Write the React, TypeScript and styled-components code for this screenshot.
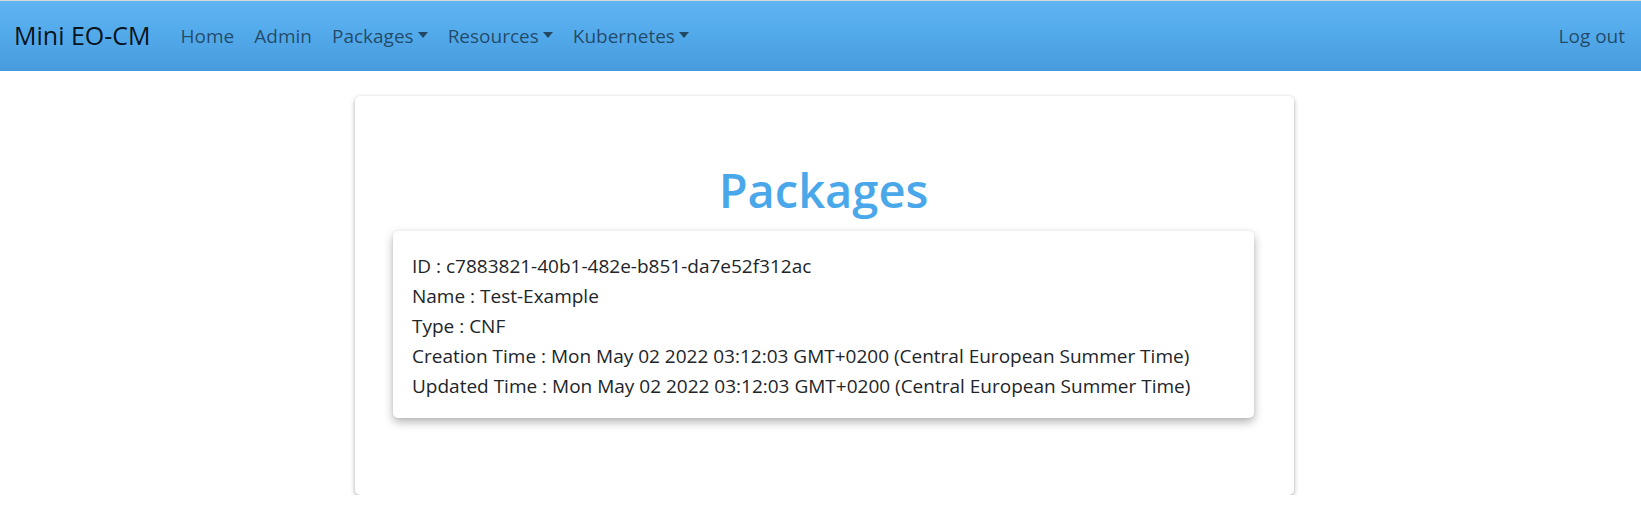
import React from "react";
import styled, { createGlobalStyle } from "styled-components";

const GlobalStyle = createGlobalStyle`
  html, body { margin: 0; padding: 0; background: #fff; }
  body {
    font-family: "Open Sans", "Noto Sans", "Liberation Sans", sans-serif;
    font-size: 19px;
    line-height: 1.5;
    color: #212529;
  }
  * { box-sizing: border-box; }
`;

const Navbar = styled.nav`
  display: flex;
  align-items: center;
  height: 71px;
  padding: 0 6px 0 14px;
  border-top: 1px solid #d9d9d9;
  background: linear-gradient(to bottom, #5fb5f2 0%, #52a9ea 50%, #469bdc 100%);
`;

const Brand = styled.a`
  font-size: 25px;
  line-height: 37.5px;
  color: rgba(0, 0, 0, 0.9);
  margin-right: 20px;
  text-decoration: none;
`;

const NavList = styled.ul`
  display: flex;
  align-items: center;
  list-style: none;
  margin: 0;
  padding: 0;
`;

const NavLink = styled.a<{ $dropdown?: boolean }>`
  display: inline-block;
  padding: 8px 10px;
  font-size: 19px;
  line-height: 30px;
  color: rgba(0, 0, 0, 0.58);
  text-decoration: none;
  cursor: pointer;
  ${(p) =>
    p.$dropdown &&
    `
    &::after {
      content: "";
      display: inline-block;
      margin-left: 4px;
      vertical-align: 5px;
      border-top: 6px solid rgba(0,0,0,0.58);
      border-left: 5.5px solid transparent;
      border-right: 5.5px solid transparent;
    }
  `}
`;

const Spacer = styled.div`
  flex: 1;
`;

const Main = styled.main`
  display: flex;
  justify-content: center;
  padding: 25px 0 0 8px;
`;

const Card = styled.section`
  width: 939px;
  padding: 64px 40px 77px 38px;
  background: #fff;
  border-radius: 5px;
  box-shadow: 0 2px 5px rgba(0, 0, 0, 0.3), 0 0 2px rgba(0, 0, 0, 0.08);
`;

const Title = styled.h1`
  margin: 0 0 11px;
  text-align: center;
  font-size: 47px;
  line-height: 60px;
  font-weight: 600;
  color: #4aa8ea;
`;

const InfoCard = styled.div`
  padding: 20px 19px 17px;
  background: #fff;
  border-radius: 5px;
  box-shadow: 0 4px 10px rgba(0, 0, 0, 0.3), 0 0 3px rgba(0, 0, 0, 0.06);
`;

const InfoLine = styled.div`
  font-size: 19px;
  line-height: 30px;
  color: #212529;
  white-space: nowrap;
`;

const info = [
  ["ID", "c7883821-40b1-482e-b851-da7e52f312ac"],
  ["Name", "Test-Example"],
  ["Type", "CNF"],
  ["Creation Time", "Mon May 02 2022 03:12:03 GMT+0200 (Central European Summer Time)"],
  ["Updated Time", "Mon May 02 2022 03:12:03 GMT+0200 (Central European Summer Time)"],
];

export default function App() {
  return (
    <>
      <GlobalStyle />
      <Navbar>
        <Brand href="#">Mini EO-CM</Brand>
        <NavList>
          <li><NavLink>Home</NavLink></li>
          <li><NavLink>Admin</NavLink></li>
          <li><NavLink $dropdown>Packages</NavLink></li>
          <li><NavLink $dropdown>Resources</NavLink></li>
          <li><NavLink $dropdown>Kubernetes</NavLink></li>
        </NavList>
        <Spacer />
        <NavList>
          <li><NavLink>Log out</NavLink></li>
        </NavList>
      </Navbar>
      <Main>
        <Card>
          <Title>Packages</Title>
          <InfoCard>
            {info.map(([k, v]) => (
              <InfoLine key={k}>
                {k} : {v}
              </InfoLine>
            ))}
          </InfoCard>
        </Card>
      </Main>
    </>
  );
}
